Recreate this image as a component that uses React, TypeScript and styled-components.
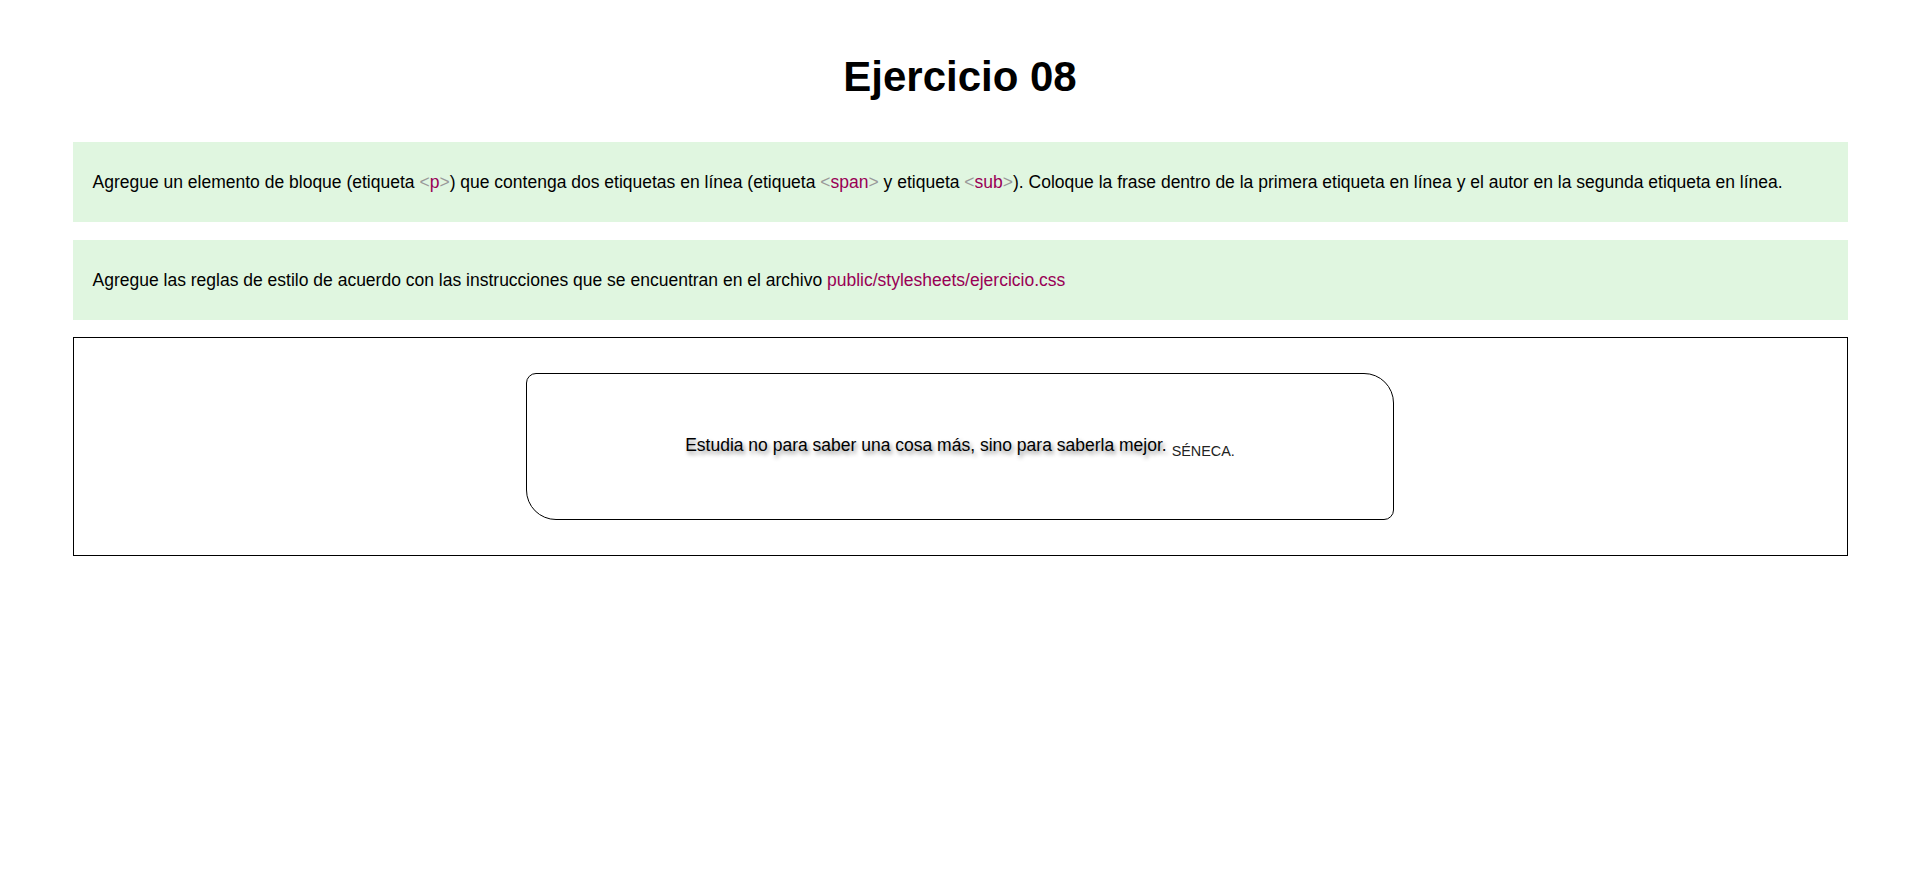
import React from "react";
import styled, { createGlobalStyle } from "styled-components";

const GlobalStyle = createGlobalStyle`
  html, body {
    margin: 0;
    padding: 0;
    background: #ffffff;
  }
  body {
    font-family: "Liberation Sans", Arial, Helvetica, sans-serif;
    color: #000000;
  }
`;

const Page = styled.main`
  width: calc(100% - 145px);
  margin: 0 auto;
  padding-top: 53px;
  padding-bottom: 40px;
`;

const Title = styled.h1`
  margin: 0 0 42px;
  text-align: center;
  font-size: 42px;
  line-height: 47px;
  font-weight: 700;
`;

const Note = styled.div`
  background: #e0f6e0;
  padding: 30px 20px;
  margin-bottom: 18px;
  font-size: 17.5px;
  line-height: 20px;
`;

const Bracket = styled.span`
  color: #999999;
`;

const TagName = styled.span`
  color: #990055;
`;

const FilePath = styled.span`
  color: #990055;
`;

const Demo = styled.section`
  margin-top: -1px;
  border: 1px solid #000000;
  padding: 35px 0;
`;

const QuoteCard = styled.p`
  box-sizing: border-box;
  width: 868px;
  height: 147px;
  margin: 0 auto;
  padding: 61px 20px 0;
  border: 1px solid #000000;
  border-radius: 10px 30px 10px 30px;
  text-align: center;
  font-size: 17.5px;
  line-height: 20px;
`;

const QuoteText = styled.span`
  text-shadow: 2px 3px 4px rgba(0, 0, 0, 0.45);
`;

const Author = styled.sub`
  margin-left: 5px;
  font-size: 14.4px;
  line-height: 20px;
  text-transform: uppercase;
  color: #222222;
`;

const Tag: React.FC<{ name: string }> = ({ name }) => (
  <>
    <Bracket>&lt;</Bracket>
    <TagName>{name}</TagName>
    <Bracket>&gt;</Bracket>
  </>
);

export default function App() {
  return (
    <>
      <GlobalStyle />
      <Page>
        <Title>Ejercicio 08</Title>
        <Note>
          Agregue un elemento de bloque (etiqueta <Tag name="p" />) que contenga dos
          etiquetas en línea (etiqueta <Tag name="span" /> y etiqueta <Tag name="sub" />).
          Coloque la frase dentro de la primera etiqueta en línea y el autor en la segunda
          etiqueta en línea.
        </Note>
        <Note>
          Agregue las reglas de estilo de acuerdo con las instrucciones que se encuentran en
          el archivo <FilePath>public/stylesheets/ejercicio.css</FilePath>
        </Note>
        <Demo>
          <QuoteCard>
            <QuoteText>Estudia no para saber una cosa más, sino para saberla mejor.</QuoteText>
            <Author>Séneca.</Author>
          </QuoteCard>
        </Demo>
      </Page>
    </>
  );
}
